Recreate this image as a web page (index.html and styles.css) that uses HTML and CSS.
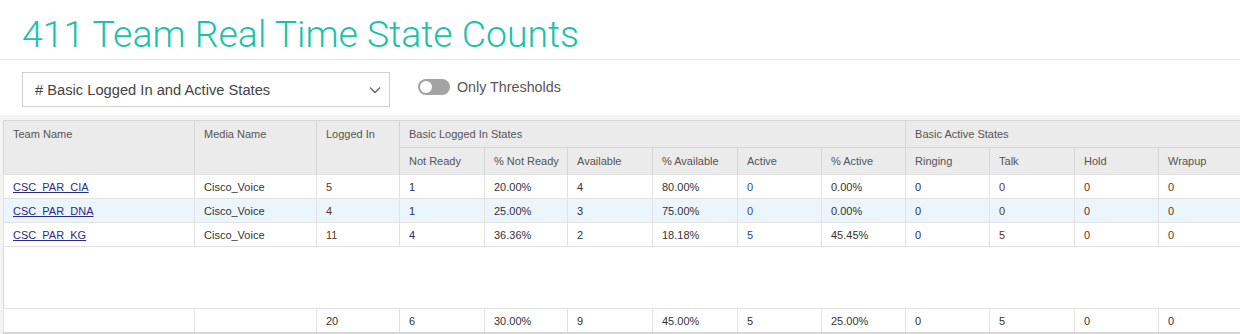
FILE: index.html
```html
<!DOCTYPE html>
<html>
<head>
<meta charset="utf-8">
<link rel="stylesheet" href="styles.css">
</head>
<body>
<header class="page-head">
  <h1 class="title">411 Team Real Time State Counts</h1>
</header>
<div class="toolbar">
  <div class="select">
    <span class="select-text"># Basic Logged In and Active States</span>
    <svg class="chev" width="12" height="8" viewBox="0 0 12 8"><path d="M1 1.5 L6 6.5 L11 1.5" fill="none" stroke="#666" stroke-width="1.4"/></svg>
  </div>
  <div class="toggle-wrap">
    <span class="toggle"><span class="knob"></span></span>
    <span class="toggle-label">Only Thresholds</span>
  </div>
</div>
<div class="grid-area">
  <table class="grid">
    <colgroup>
      <col class="c-team"><col class="c-media"><col class="c-83"><col class="c-85"><col class="c-83"><col class="c-85"><col class="c-85"><col class="c-84"><col class="c-84"><col class="c-84"><col class="c-85"><col class="c-84"><col class="c-last">
    </colgroup>
    <thead>
      <tr class="h1">
        <th rowspan="2">Team Name</th>
        <th rowspan="2">Media Name</th>
        <th rowspan="2">Logged In</th>
        <th colspan="6">Basic Logged In States</th>
        <th colspan="4">Basic Active States</th>
      </tr>
      <tr class="h2">
        <th>Not Ready</th><th>% Not Ready</th><th>Available</th><th>% Available</th><th>Active</th><th>% Active</th>
        <th>Ringing</th><th>Talk</th><th>Hold</th><th>Wrapup</th>
      </tr>
    </thead>
    <tbody>
      <tr class="first">
        <td><a href="#">CSC_PAR_CIA</a></td><td>Cisco_Voice</td><td class="brn">5</td><td class="nav">1</td><td>20.00%</td><td>4</td><td>80.00%</td><td class="blu">0</td><td>0.00%</td><td class="nav">0</td><td class="brn">0</td><td class="red">0</td><td class="brn">0</td>
      </tr>
      <tr class="alt">
        <td><a href="#">CSC_PAR_DNA</a></td><td>Cisco_Voice</td><td class="brn">4</td><td class="nav">1</td><td>25.00%</td><td>3</td><td>75.00%</td><td class="blu">0</td><td>0.00%</td><td class="nav">0</td><td class="brn">0</td><td class="red">0</td><td class="brn">0</td>
      </tr>
      <tr>
        <td><a href="#">CSC_PAR_KG</a></td><td>Cisco_Voice</td><td class="brn">11</td><td class="nav">4</td><td>36.36%</td><td>2</td><td>18.18%</td><td class="blu">5</td><td>45.45%</td><td class="nav">0</td><td class="brn">5</td><td class="red">0</td><td class="brn">0</td>
      </tr>
      <tr class="spacer"><td colspan="13"></td></tr>
    </tbody>
    <tfoot>
      <tr>
        <td></td><td></td><td>20</td><td>6</td><td>30.00%</td><td>9</td><td>45.00%</td><td>5</td><td>25.00%</td><td>0</td><td>5</td><td>0</td><td>0</td>
      </tr>
    </tfoot>
  </table>
</div>
</body>
</html>
```
FILE: styles.css
```css
html, body {
  margin: 0;
  padding: 0;
  background: #fff;
  overflow: hidden;
  font-family: "Liberation Sans", Arial, sans-serif;
}
.page-head {
  border-bottom: 1px solid #e6e6e6;
  padding-left: 22px;
  box-sizing: border-box;
  height: 60px;
}
.title {
  margin: 0;
  padding-top: 12px;
  font-family: Roboto, "Liberation Sans", sans-serif;
  font-weight: 300;
  font-size: 37.4px;
  line-height: 45px;
  color: #1bc2aa;
}
.toolbar {
  display: flex;
  align-items: center;
  height: 55px;
  padding-left: 22px;
}
.select {
  width: 368px;
  height: 35px;
  box-sizing: border-box;
  border: 1px solid #cfcfcf;
  display: flex;
  align-items: center;
  justify-content: space-between;
  padding: 0 8px 0 12px;
  margin-top: 4px;
}
.select-text {
  font-size: 14.7px;
  color: #444;
}
.chev { margin-top: 1px; }
.toggle-wrap {
  display: flex;
  align-items: center;
  margin-left: 28px;
  margin-top: -1px;
}
.toggle {
  width: 32px;
  height: 16px;
  border-radius: 8px;
  background: #a3a3a3;
  display: flex;
  align-items: center;
  padding-left: 2px;
  box-sizing: border-box;
}
.knob {
  width: 12px;
  height: 12px;
  border-radius: 50%;
  background: #fff;
}
.toggle-label {
  margin-left: 7px;
  font-size: 14.3px;
  color: #555;
}
.grid-area {
  background: #f4f4f4;
  padding: 5px 0 2px 3px;
}
.grid {
  border-collapse: collapse;
  table-layout: fixed;
  width: 1300px;
  background: #fff;
  font-size: 11px;
  color: #333;
}
.c-team { width: 191px; }
.c-media { width: 122px; }
.c-83 { width: 83px; }
.c-85 { width: 85px; }
.c-84 { width: 84px; }
.c-last { width: 145px; }
.grid th {
  background: #ebebeb;
  color: #555;
  font-weight: normal;
  text-align: left;
  padding: 0 9px;
  border: 1px solid #d6d6d6;
  white-space: nowrap;
}
.grid tr.h1 th { height: 26px; }
.grid tr.h1 th[rowspan] { vertical-align: top; padding-top: 7px; }
.grid tr.h2 th { height: 26px; }
.grid thead tr.h2 th { border-bottom: 1px dotted #9a9a9a; }
.grid thead tr.h1 th[rowspan] { border-bottom: 1px dotted #9a9a9a; }
.grid td {
  height: 23px;
  padding: 0 9px;
  border: 1px solid #e2e2e2;
  white-space: nowrap;
}
.grid tr.alt td { background: #eaf6fc; }
.grid tr.spacer td {
  height: 61px;
  padding: 0;
  border-left: 1px solid #d6d6d6;
}
.grid tfoot td {
  height: 23px;
  border-top: 1px solid #e2e2e2;
  border-bottom: 2px solid #d6d6d6;
}
.grid a { color: #2a2a8e; }
.brn { color: #5b3a22; }
.nav { color: #1f2d6e; }
.blu { color: #1f4a9e; }
.red { color: #6e2a1f; }
```
